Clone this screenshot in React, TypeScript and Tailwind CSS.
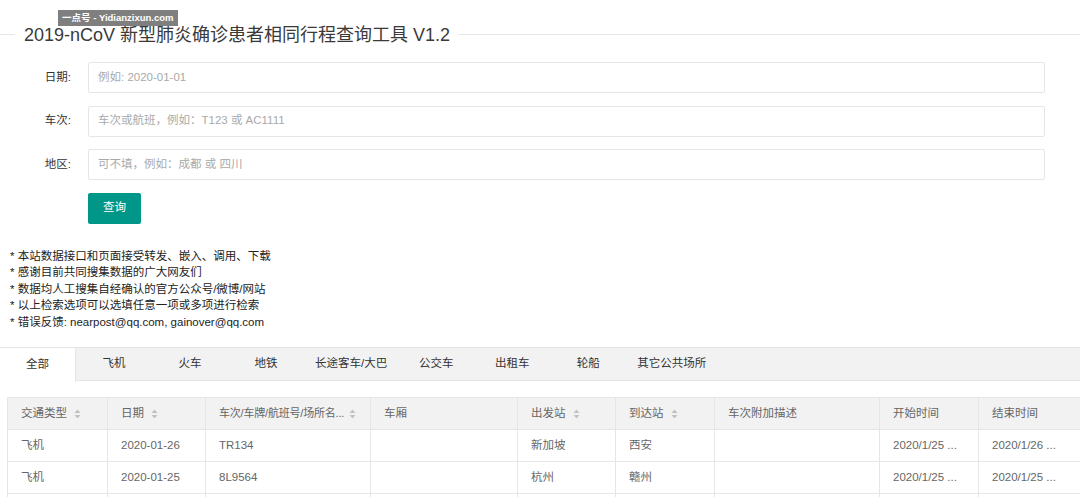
import React from 'react';

const FONT = "font-['Liberation_Sans','Noto_Sans_CJK_SC',sans-serif]";

function SortIcon({ gap = 'ml-[7px]' }: { gap?: string }) {
  return (
    <svg width="7" height="10" viewBox="0 0 7 10" className={`${gap} shrink-0`}>
      <path d="M3.5 0.5 L6.5 4 H0.5 Z" fill="#c2c2c2" />
      <path d="M3.5 9.5 L6.5 6 H0.5 Z" fill="#c2c2c2" />
    </svg>
  );
}

const tabs = ['全部', '飞机', '火车', '地铁', '长途客车/大巴', '公交车', '出租车', '轮船', '其它公共场所'];

const columns: { title: string; w: number; sort?: boolean; tight?: boolean }[] = [
  { title: '交通类型', w: 100, sort: true },
  { title: '日期', w: 98, sort: true },
  { title: '车次/车牌/航班号/场所名...', w: 165, sort: true, tight: true },
  { title: '车厢', w: 147 },
  { title: '出发站', w: 98, sort: true },
  { title: '到达站', w: 99, sort: true },
  { title: '车次附加描述', w: 165 },
  { title: '开始时间', w: 99 },
  { title: '结束时间', w: 110 },
];

const rows = [
  ['飞机', '2020-01-26', 'TR134', '', '新加坡', '西安', '', '2020/1/25 ...', '2020/1/26 ...'],
  ['飞机', '2020-01-25', '8L9564', '', '杭州', '赣州', '', '2020/1/25 ...', '2020/1/25 ...'],
  // last row only peeks in at the bottom edge
  ['', '', '', '', '', '', '', '', ''],
];

const fields = [
  { label: '日期:', placeholder: '例如: 2020-01-01' },
  { label: '车次:', placeholder: '车次或航班，例如：T123 或 AC1111' },
  { label: '地区:', placeholder: '可不填，例如：成都 或 四川' },
];

const notes = [
  '* 本站数据接口和页面接受转发、嵌入、调用、下载',
  '* 感谢目前共同搜集数据的广大网友们',
  '* 数据均人工搜集自经确认的官方公众号/微博/网站',
  '* 以上检索选项可以选填任意一项或多项进行检索',
  '* 错误反馈: nearpost@qq.com, gainover@qq.com',
];

export default function App() {
  return (
    <div className={`${FONT} relative w-[1080px] h-[497px] overflow-hidden bg-white text-[#333]`}>
      {/* watermark */}
      <div className="absolute left-[58px] top-[10px] h-[16px] px-[4px] flex items-center bg-[#7f7f7f] text-white text-[9.5px] font-bold leading-none z-10">
        一点号 - Yidianzixun.com
      </div>

      {/* title */}
      <div className="flex items-center pt-[24px] h-[45px]">
        <div className="w-[15px] h-px bg-[#e6e6e6]" />
        <div className="px-[9px] text-[18px] leading-[20px] text-[#3a3a3a]">
          2019-nCoV 新型肺炎确诊患者相同行程查询工具 V1.2
        </div>
        <div className="flex-1 h-px bg-[#e6e6e6]" />
      </div>

      {/* form */}
      <div className="flex flex-col gap-[12.5px] pt-[17px] pr-[35px]">
        {fields.map((f) => (
          <div key={f.label} className="flex items-center">
            <label className="w-[88px] pr-[17px] text-right text-[11.5px] text-[#333]">{f.label}</label>
            <div className="flex-1 h-[31px] flex items-center border border-[#e6e6e6] rounded-[2px] pl-[9px] text-[11.5px] text-[#a9a9a9]">
              {f.placeholder}
            </div>
          </div>
        ))}
        <div className="pl-[88px]">
          <button className="w-[53px] h-[31px] bg-[#009688] rounded-[2px] text-white text-[11.5px]">查询</button>
        </div>
      </div>

      {/* notes */}
      <div className="pt-[24px] pl-[10px] text-[11.5px] leading-[16.5px] text-[#222]">
        {notes.map((n) => (
          <div key={n}>{n}</div>
        ))}
      </div>

      {/* tabs */}
      <div className="mt-[17px] flex h-[34px] bg-[#f2f2f2] border-t border-b border-[#e6e6e6]">
        {tabs.map((t, i) => (
          <div
            key={t}
            className={`min-w-[76px] px-[11px] flex items-center justify-center text-[11.5px] text-[#333] whitespace-nowrap ${
              i === 0 ? 'bg-white border-r border-[#e6e6e6] h-[34px]' : ''
            }`}
          >
            {t}
          </div>
        ))}
      </div>

      {/* table */}
      <div className="pl-[7px] pt-[16px]">
        <table className="table-fixed border-collapse text-[11.5px] text-[#666]" style={{ width: 1081 }}>
          <colgroup>
            {columns.map((c) => (
              <col key={c.title} style={{ width: c.w }} />
            ))}
          </colgroup>
          <thead>
            <tr className="bg-[#f2f2f2] h-[32px]">
              {columns.map((c) => (
                <th
                  key={c.title}
                  className={`border border-[#e6e6e6] font-normal text-left ${c.tight ? 'pl-[13px] pr-[4px]' : 'px-[13px]'}`}
                >
                  <div className="flex items-center whitespace-nowrap">
                    <span className={c.tight ? 'min-w-0 overflow-hidden text-[11px] tracking-[-0.2px]' : ''}>{c.title}</span>
                    {c.sort && <SortIcon gap={c.tight ? 'ml-[5px]' : 'ml-[7px]'} />}
                  </div>
                </th>
              ))}
            </tr>
          </thead>
          <tbody>
            {rows.map((r, ri) => (
              <tr key={ri} className="h-[32px]">
                {r.map((cell, ci) => (
                  <td key={ci} className="border border-[#e6e6e6] px-[13px] whitespace-nowrap overflow-hidden">
                    {cell}
                  </td>
                ))}
              </tr>
            ))}
          </tbody>
        </table>
      </div>
    </div>
  );
}
